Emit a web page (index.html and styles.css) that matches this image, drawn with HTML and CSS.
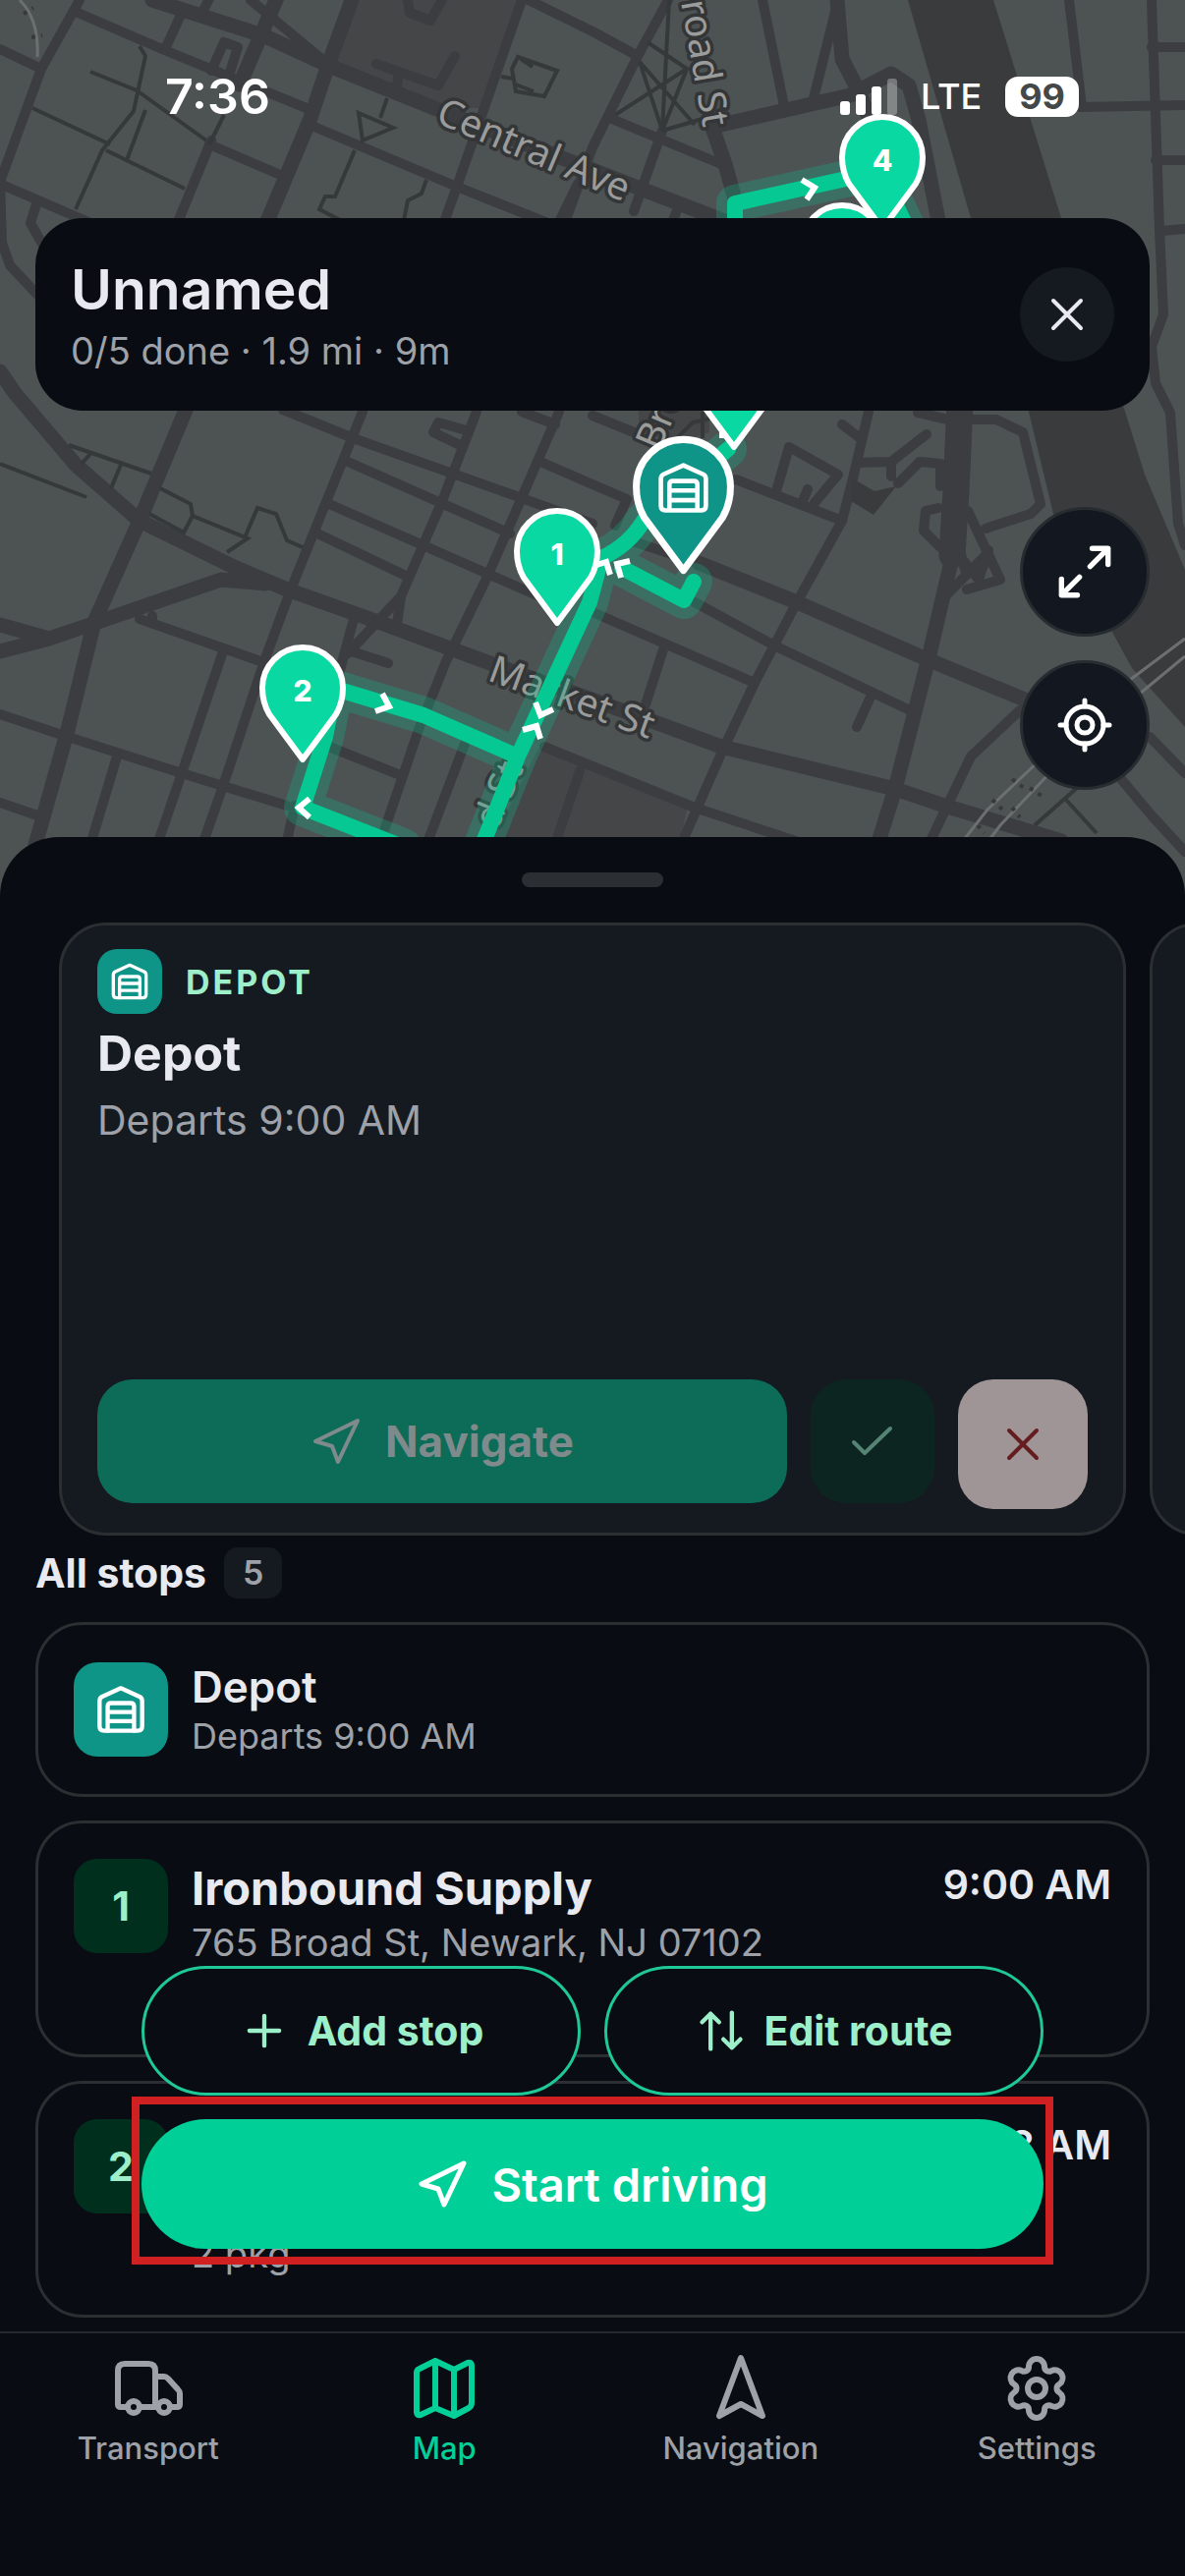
FILE: index.html
```html
<!DOCTYPE html>
<html lang="en">
<head>
    <meta charset="UTF-8">
    <meta name="viewport" content="width=device-width, initial-scale=1.0">
    <title>Route Map</title>
    <link rel="stylesheet" href="styles.css">
</head>
<body>
    <!-- Shared icons -->
    <svg class="sprite" aria-hidden="true">
        <symbol id="icon-depot" viewBox="0 0 24 24">
            <path d="M12 2 L20.8 6 Q22 6.6 22 8 V20 Q22 22 20 22 H4 Q2 22 2 20 V8 Q2 6.6 3.2 6 Z"/>
            <path d="M5.8 22 V10.6 Q5.8 9 7.4 9 H16.6 Q18.2 9 18.2 10.6 V22 M5.8 13.2 H18.2 M5.8 17.5 H18.2"/>
        </symbol>
        <symbol id="icon-send" viewBox="-26 -26 52 52">
            <path d="M22 -21 L-21 0 L-4 5 L2 21 Z"/>
        </symbol>
        <symbol id="icon-close" viewBox="-26 -26 52 52">
            <path d="M-14 -14 L14 14 M14 -14 L-14 14"/>
        </symbol>
        <symbol id="pin" viewBox="-50 -126 100 130" overflow="visible">
            <path d="M0 -4 L-34 -50 Q-41 -62 -41 -77 A41 41 0 0 1 41 -77 Q41 -62 34 -50 Z"/>
        </symbol>
    </svg>

    <main>
        <section class="map-area">
            <svg class="map" viewBox="0 0 1206 918" preserveAspectRatio="xMidYMin slice" aria-hidden="true">
                <!-- Parks and river -->
                <g class="park">
                    <path d="M363 0 L342 63 L442 110 L490 110 L531 0 Z"/>
                    <path d="M548 762 L603 783 L699 823 L690 870 L494 870 Z"/>
                    <path d="M650 400 H722 V440 L690 450 L650 440 Z"/>
                </g>
                <path class="water" d="M924 0 H1011 L1080 222 L1145 419 L1165 483 L1206 580 V740 L1152 680 L1134 647 L1072 523 L1047 419 L988 222 Z"/>

                <!-- Wide roads -->
                <g class="road road-wide">
                    <path d="M155 0 L270 37 L335 67 L442 110 L626 182 L740 226"/>
                    <path d="M358 0 L335 63 L315 123 L270 230 M283 -5 L244 86"/>
                    <path d="M0 378 L15 400 L77 473 L142 530 L238 577 L292 600 L385 633 L504 677 L661 733 L734 760 L911 803 L961 820 L1080 856"/>
                    <path d="M192 410 L142 530 L96 633 L69 743 L36 860"/>
                    <path d="M0 663 L50 650 L100 633 L225 590 L270 594 M0 636 L50 650"/>
                    <path d="M972 555 L945 670 L911 803 L893 860"/>
                    <path d="M711 573 L811 613 L941 670 L1050 715"/>
                    <path d="M724 127 L738 167 L750 210"/>
                    <path d="M852 0 L857 60 L876 97 L889 133 M734 127 L865 97 L907 75 L925 87 L935 122 L955 225"/>
                </g>
                <path class="road road-huge" d="M977 410 L973 500 L969 565"/>

                <!-- Streets -->
                <g class="road">
                    <path d="M77 12 L165 50 L319 113 M315 127 L465 190 L555 226 M531 0 L465 190 L452 226"/>
                    <path d="M81 0 L42 70 L0 185 M0 50 L42 70 M0 187 L90 226"/>
                    <path d="M255 0 L330 62 M185 13 L168 50 M215 -5 L206 12 M213 147 L283 177 M215 143 L181 226"/>
                    <path d="M215 72 L228 43 L242 48 L232 80 M415 0 L417 13 L438 21 L450 0 M383 65 L446 87 L463 57 M405 80 L403 96"/>
                    <path d="M538 0 L603 32 L649 57 M680 0 L649 57 L603 150 L575 226 M588 187 L569 226"/>
                    <path d="M620 120 L734 167 M674 133 L645 215 M689 214 L685 224"/>
                    <path d="M776 0 L799 113 M850 12 L826 108 M1088 0 L1101 108 M1099 109 L1206 107"/>
                    <path d="M1172 0 L1180 233 L1184 320 L1172 353 L1176 390 L1191 420 L1199 533 L1206 555"/>
                    <path d="M1172 48 H1206 M1176 163 H1206 M1182 235 L1206 233"/>
                    <path d="M0 185 L2 247 L10 270 L40 302 M37 208 L31 227 L44 250"/>
                    <path d="M142 630 L265 673 M155 627 V634 M369 419 L296 600 L269 673 L227 800 L206 860"/>
                    <path d="M485 419 L450 510 L408 607 L404 635 M408 607 L354 665 M569 419 L496 587 L454 673 L427 740 L386 860"/>
                    <path d="M288 417 L362 447 L531 507 L603 533 M354 470 L519 543 M335 513 L560 612 M323 543 L415 587"/>
                    <path d="M550 470 L603 493 L638 508 L626 535 M531 419 L565 432 M603 423 L645 440"/>
                    <path d="M471 437 L446 430 L441 440 L470 454"/>
                    <path d="M0 727 L69 750 L185 787 L292 820 M0 817 L38 830 M227 663 L185 787 L160 860 M119 770 L92 860"/>
                    <path d="M360 630 L350 667 L331 740 M358 663 L395 675 M335 760 L410 790 M473 757 L434 860 M300 820 L292 856"/>
                    <path d="M554 760 L603 780 L707 822 L810 856 M590 785 L566 856"/>
                    <path d="M749 488 L857 530 M707 613 L788 657 L926 723 M603 623 L768 695 M641 550 L711 573"/>
                    <path d="M884 419 L868 487 L857 530 L811 613 L768 695 L734 767 L693 860"/>
                    <path d="M991 427 L1014 427 L1041 440 L1059 513 L1049 523 L1003 538 M934 420 L965 427"/>
                    <path d="M985 520 L1018 590 L984 600 M980 570 L996 590 L1006 560 M964 605 L1006 562 M977 560 L982 580"/>
                    <path d="M803 455 L853 483 L828 513 M803 455 L790 500 M872 471 L907 470 L943 442 M857 432 L874 445 M914 492 L936 470 L957 472 V495 M907 470 V485 M822 498 L816 512"/>
                    <path d="M955 517 L942 520 L940 540 L957 557 M676 658 L657 717 M887 707 L872 740"/>
                    <path d="M1038 723 L988 770 L945 860 M1141 793 L1172 830 L1206 867 M1170 750 L1206 787"/>
                </g>
                <path class="road-block" d="M868 487 L890 500 L912 495 L889 524 L866 510 Z"/>

                <!-- Footpaths -->
                <g class="path">
                    <path d="M92 73 L139 92 L210 143 M142 47 L148 57 L136 113 L104 153 L77 213 M33 110 L112 147 M108 153 L188 192 M148 112 L129 163 M228 117 L213 147"/>
                    <path d="M365 115 L400 130 L369 143 Z M394 100 L387 120 M361 153 L341 200 L331 200 L325 213 L346 224 M434 183 L429 197 L415 204 L411 224"/>
                    <path d="M527 58 L567 72 L554 98 L525 93 L521 70 Z M510 78 L522 80 M530 60 L542 68 M525 86 L543 93"/>
                    <path d="M681 0 L674 133 M659 43 L699 70 L626 117 M651 63 L707 127 M699 70 L674 133 M674 133 L718 120 M651 63 L674 133"/>
                    <path d="M70 453 L154 482 M92 462 L83 472 M123 473 L113 497 M0 472 L88 506 M163 497 L194 513 L196 525 L252 548 L231 562 M196 525 L187 542 L152 523 M250 545 L262 517 L281 523 L292 550 L308 557"/>
                    <path d="M690 445 L705 430 L722 426 M715 419 V446 M1053 840 L1096 802 M1084 813 L1116 848"/>
                </g>

                <!-- Railway -->
                <g class="rail">
                    <path d="M20 0 Q40 20 38 58"/>
                    <path d="M1206 650 L1150 692 L1060 772 L1005 824 L980 856"/>
                    <path d="M1206 668 L1160 706 L1070 785 L1018 840 L1006 856"/>
                </g>
                <path class="rail-ties" d="M24 14 L34 8 M32 38 L43 36 M1030 793 L1042 802 M1048 802 L1060 810 M1010 814 L1020 824 M1030 822 L1038 832 M995 840 L1002 848"/>

                <!-- Street names -->
                <g class="street-name">
                    <text transform="translate(442 124) rotate(23)">Central Ave</text>
                    <text transform="translate(693 2) rotate(80)">road St</text>
                    <text transform="translate(495 692) rotate(20)">Market St</text>
                    <text transform="translate(671 460) rotate(-67)">Bro</text>
                    <text transform="translate(506 846) rotate(-67)">d St</text>
                </g>

                <!-- Planned route -->
                <path class="route-glow" d="M706 592 L696 611 L633 578 M741 457 L655 530 Q640 555 612 568 L600 613 L527 770 L490 862 M345 702 L431 728 L527 770 M340 705 L331 750 L308 822 L410 862 M748 240 V207 L870 180 M898 180 L922 230"/>
                <path class="route-line" d="M706 592 L696 611 L633 578 M741 457 L655 530 Q640 555 612 568 L600 613 L527 770 L490 862 M345 702 L431 728 L527 770 M340 705 L331 750 L308 822 L410 862 M748 240 V207 L870 180 M898 180 L922 230"/>
                <path class="route-arrows" d="M816 183 L829 191 L821 203 M389 706 L396 719 L382 724 M545 715 L550 728 L563 722 M532 743 L546 739 L550 752 M315 813 L304 822 L315 832 M641 571 L628 574 L632 588 M607 575 L617 572 L621 585 M732 443 H738"/>

                <!-- Stops -->
                <g class="pins">
                    <use href="#pin" x="807" y="201" width="100" height="130"/>
                    <use href="#pin" x="848" y="111" width="100" height="130"/>
                    <use href="#pin" x="697" y="333" width="100" height="130"/>
                    <use href="#pin" x="517" y="512" width="100" height="130"/>
                    <use href="#pin" x="258" y="651" width="100" height="130"/>
                    <use class="pin-depot" href="#pin" x="637" y="438" width="117" height="152"/>
                </g>
                <use class="pin-icon" href="#icon-depot" x="668" y="469" width="55" height="55"/>
                <g class="pin-number">
                    <text x="898" y="174">4</text>
                    <text x="567" y="575">1</text>
                    <text x="308" y="714">2</text>
                </g>
            </svg>

            <div class="overlay">
                <div class="status-bar">
                    <span class="clock">7:36</span>
                    <div class="status-right">
                        <svg class="signal" viewBox="0 0 58 37" aria-hidden="true">
                            <rect x="0" y="23" width="10" height="14" rx="3"/>
                            <rect x="16" y="16" width="10" height="21" rx="3"/>
                            <rect x="32" y="8" width="10" height="29" rx="3"/>
                            <rect class="bar-off" x="48" y="0" width="10" height="37" rx="3"/>
                        </svg>
                        <span class="network">LTE</span>
                        <span class="battery">99</span>
                    </div>
                </div>

                <header class="route-header">
                    <div>
                        <h1>Unnamed</h1>
                        <p>0/5 done · 1.9 mi · 9m</p>
                    </div>
                    <button class="close-btn" type="button" aria-label="Close">
                        <svg class="icon"><use href="#icon-close"/></svg>
                    </button>
                </header>

                <div class="map-controls">
                    <button type="button" aria-label="Fit route">
                        <svg class="icon" viewBox="-26 -26 52 52">
                            <path d="M5 -5 L22 -22 M7 -22 H22 V-7 M-5 5 L-22 22 M-7 22 H-22 V7"/>
                        </svg>
                    </button>
                    <button type="button" aria-label="My location">
                        <svg class="icon" viewBox="-28 -28 56 56">
                            <circle r="19"/>
                            <circle r="8"/>
                            <path d="M0 -19 V-25 M0 19 V25 M-19 0 H-25 M19 0 H25"/>
                        </svg>
                    </button>
                </div>
            </div>
        </section>

        <section class="sheet">
            <div class="handle"></div>

            <div class="cards">
                <article class="card">
                    <div class="card-label">
                        <span class="depot-badge"><svg class="icon"><use href="#icon-depot"/></svg></span>
                        DEPOT
                    </div>
                    <h2>Depot</h2>
                    <p>Departs 9:00 AM</p>
                    <div class="card-actions">
                        <button class="navigate-btn" type="button" disabled>
                            <svg class="icon"><use href="#icon-send"/></svg>
                            Navigate
                        </button>
                        <button class="done-btn" type="button" aria-label="Mark done" disabled>
                            <svg class="icon" viewBox="-26 -26 52 52"><path d="M-19 1 L-8 12 L18 -13"/></svg>
                        </button>
                        <button class="skip-btn" type="button" aria-label="Skip stop" disabled>
                            <svg class="icon"><use href="#icon-close"/></svg>
                        </button>
                    </div>
                </article>
                <article class="card"></article>
            </div>

            <div class="stops-title">
                <h3>All stops</h3>
                <span class="count">5</span>
            </div>

            <ul class="stops">
                <li class="stop stop-depot">
                    <span class="tile"><svg class="icon"><use href="#icon-depot"/></svg></span>
                    <div class="stop-info">
                        <h4>Depot</h4>
                        <p>Departs 9:00 AM</p>
                    </div>
                </li>
                <li class="stop">
                    <span class="tile">1</span>
                    <div class="stop-info">
                        <h4>Ironbound Supply</h4>
                        <p>765 Broad St, Newark, NJ 07102</p>
                        <p>&nbsp;</p>
                    </div>
                    <time>9:00 AM</time>
                </li>
                <li class="stop">
                    <span class="tile">2</span>
                    <div class="stop-info">
                        <h4>&nbsp;</h4>
                        <p>&nbsp;</p>
                        <p>2 pkg</p>
                    </div>
                    <time>9:03 AM</time>
                </li>
            </ul>
        </section>

        <div class="actions">
            <button class="outline-btn" type="button">
                <svg class="icon" viewBox="-24 -24 48 48"><path d="M-14 0 H14 M0 -14 V14"/></svg>
                Add stop
            </button>
            <button class="outline-btn" type="button">
                <svg class="icon" viewBox="-24 -24 48 48"><path d="M-10 17 V-16 M-18 -8 L-10 -16 L-2 -8 M10 -17 V16 M2 8 L10 16 L18 8"/></svg>
                Edit route
            </button>
            <div class="start">
                <button class="start-btn" type="button">
                    <svg class="icon"><use href="#icon-send"/></svg>
                    Start driving
                </button>
                <div class="highlight"></div>
            </div>
        </div>
    </main>

    <nav class="tab-bar">
        <a href="#transport">
            <svg class="icon" viewBox="-36 -36 72 72">
                <path d="M-21 19 H-28 Q-31 19 -31 16 V-18 Q-31 -25 -24 -25 H0 Q7 -25 7 -18 V19 M-9 19 H10 M7 -12 H16 Q18 -12 20 -10 L30 1 Q32 3 32 5 V16 Q32 19 29 19 H22"/>
                <circle cx="-15" cy="19" r="6"/>
                <circle cx="16" cy="19" r="6"/>
            </svg>
            Transport
        </a>
        <a class="active" href="#map">
            <svg class="icon" viewBox="-36 -36 72 72">
                <path d="M-28 -16 Q-28 -19 -25 -20 L-9 -28 L10 -19 L24 -26 Q28 -27 28 -23 V15 Q28 18 25 20 L10 28 L-9 20 L-24 27 Q-28 28 -28 24 Z M-9 -28 V20 M10 -19 V28"/>
            </svg>
            Map
        </a>
        <a href="#navigation">
            <svg class="icon" viewBox="-36 -36 72 72">
                <path d="M0 -31 L22 28 L0 16 L-22 28 Z"/>
            </svg>
            Navigation
        </a>
        <a href="#settings">
            <svg class="icon" viewBox="-36 -36 72 72">
                <path d="M-8 -22 A8 8 0 0 1 8 -22 A4.6 4.6 0 0 0 15 -17.9 A8 8 0 0 1 23 -4.1 A4.6 4.6 0 0 0 23 4.1 A8 8 0 0 1 15 17.9 A4.6 4.6 0 0 0 8 22 A8 8 0 0 1 -8 22 A4.6 4.6 0 0 0 -15 17.9 A8 8 0 0 1 -23 4.1 A4.6 4.6 0 0 0 -23 -4.1 A8 8 0 0 1 -15 -17.9 A4.6 4.6 0 0 0 -8 -22 Z"/>
                <circle r="9"/>
            </svg>
            Settings
        </a>
    </nav>
</body>
</html>
```
FILE: styles.css
```css
* {
    box-sizing: border-box;
}

body {
    font-family: Inter, "Liberation Sans", sans-serif;
    margin: 0;
    height: 100vh;
    display: flex;
    flex-direction: column;
    background: #090d13;
    color: #e8eaf0;
    overflow: hidden;
}

h1, h2, h3, h4, p, ul {
    margin: 0;
    padding: 0;
}

button {
    font-family: inherit;
    border: none;
    padding: 0;
    cursor: pointer;
    display: flex;
    align-items: center;
    justify-content: center;
}

.sprite {
    position: absolute;
    width: 0;
    height: 0;
}

.icon {
    width: 52px;
    height: 52px;
    flex: none;
    fill: none;
    stroke: currentColor;
    stroke-width: 4px;
    stroke-linecap: round;
    stroke-linejoin: round;
}

main {
    flex: 1;
    min-height: 0;
    position: relative;
    display: flex;
    flex-direction: column;
    overflow: hidden;
}

/* Map */
.map-area {
    flex: none;
    height: 918px;
    position: relative;
    background: #4d5253;
}

.map {
    position: absolute;
    inset: 0;
    width: 100%;
    height: 100%;
}

.park {
    fill: #454648;
}

.water,
.road-block {
    fill: #3a3b3d;
}

.road {
    fill: none;
    stroke: #3c3d40;
    stroke-width: 10;
    stroke-linejoin: round;
    stroke-linecap: round;
}

.road-wide {
    stroke-width: 15;
}

.road-huge {
    stroke-width: 27;
}

.path {
    fill: none;
    stroke: #35393a;
    stroke-width: 4;
}

.rail {
    fill: none;
    stroke: #6c6f70;
    stroke-width: 3;
}

.rail-ties {
    stroke: #38393b;
    stroke-width: 4;
    stroke-dasharray: 4 6;
}

.street-name {
    font-family: "Noto Sans", sans-serif;
    font-size: 39px;
    fill: #9a9b9b;
    stroke: #333536;
    stroke-width: 7;
    stroke-linejoin: round;
    paint-order: stroke;
}

.route-glow {
    fill: none;
    stroke: #13b489;
    stroke-opacity: 0.3;
    stroke-width: 38;
    stroke-linejoin: round;
    stroke-linecap: round;
}

.route-line {
    fill: none;
    stroke: #05c893;
    stroke-width: 16;
    stroke-linejoin: round;
    stroke-linecap: round;
}

.route-arrows {
    fill: none;
    stroke: #fff;
    stroke-width: 6;
}

.pins {
    fill: #0ad8a2;
    stroke: #fff;
    stroke-width: 6;
    stroke-linejoin: round;
}

.pin-depot {
    fill: #0f9488;
}

.pin-icon {
    fill: none;
    stroke: #fff;
    stroke-width: 2;
    stroke-linejoin: round;
}

.pin-number {
    font-size: 30px;
    font-weight: 800;
    fill: #fff;
    text-anchor: middle;
}

.overlay {
    position: relative;
    padding: 68px 36px 0;
}

.status-bar {
    display: flex;
    justify-content: space-between;
    align-items: center;
    height: 60px;
    padding: 0 66px 0 132px;
    color: #fff;
}

.clock {
    font-size: 50px;
    font-weight: 600;
}

.status-right {
    display: flex;
    align-items: center;
    gap: 24px;
}

.signal {
    width: 58px;
    height: 37px;
    fill: #fff;
}

.bar-off {
    opacity: 0.3;
}

.network {
    font-size: 36px;
    font-weight: 500;
}

.battery {
    padding: 0 14px;
    background: #fff;
    border-radius: 13px;
    color: #444849;
    font-size: 36px;
    font-weight: 700;
    line-height: 41px;
    margin-right: 6px;
}

.route-header {
    display: flex;
    align-items: center;
    justify-content: space-between;
    margin-top: 94px;
    padding: 36px;
    background: #090d13;
    border-radius: 48px;
}

.route-header h1 {
    font-size: 57px;
    font-weight: 600;
    line-height: 74px;
}

.route-header p {
    font-size: 38px;
    line-height: 50px;
    color: #9ea2a8;
}

.close-btn {
    width: 96px;
    height: 96px;
    border-radius: 50%;
    background: #151a21;
    color: #e8eaf0;
}

.map-controls {
    display: flex;
    flex-direction: column;
    align-items: flex-end;
    gap: 24px;
    margin-top: 98px;
}

.map-controls button {
    width: 132px;
    height: 132px;
    border-radius: 50%;
    background: #131820;
    border: 3px solid #272c31;
    color: #fff;
}

.map-controls .icon {
    width: 56px;
    height: 56px;
    stroke-width: 5px;
}

/* Bottom sheet */
.sheet {
    position: relative;
    flex: 1;
    margin-top: -66px;
    padding-top: 36px;
    background: #090d13;
    border-radius: 60px 60px 0 0;
}

.handle {
    width: 144px;
    height: 15px;
    margin: 0 auto 36px;
    border-radius: 8px;
    background: #2b2f33;
}

.cards {
    display: flex;
    gap: 24px;
    padding-left: 60px;
    overflow: hidden;
}

.card {
    flex: 0 0 calc(100% - 60px);
    height: 624px;
    display: flex;
    flex-direction: column;
    padding: 24px 36px;
    background: #151a21;
    border: 3px solid #2b2f32;
    border-radius: 48px;
}

.card-label {
    display: flex;
    align-items: center;
    gap: 24px;
    font-size: 34px;
    font-weight: 700;
    letter-spacing: 3px;
    color: #9defca;
}

.depot-badge {
    display: flex;
    align-items: center;
    justify-content: center;
    width: 66px;
    height: 66px;
    border-radius: 20px;
    background: #0f9488;
    color: #fff;
}

.depot-badge .icon {
    width: 40px;
    height: 40px;
    stroke-width: 2px;
}

.card h2 {
    margin-top: 8px;
    font-size: 50px;
    font-weight: 700;
    line-height: 64px;
}

.card p {
    margin-top: 8px;
    font-size: 41px;
    line-height: 56px;
    color: #9ea2a8;
}

.card-actions {
    display: flex;
    align-items: flex-start;
    gap: 24px;
    margin-top: auto;
}

.card-actions button {
    height: 126px;
    border-radius: 36px;
}

.navigate-btn {
    flex: 1;
    gap: 24px;
    background: #0d6c57;
    color: #7f8a8c;
    font-size: 44px;
    font-weight: 700;
}

.done-btn {
    width: 126px;
    background: #0c2520;
    color: #568474;
}

.card-actions .skip-btn {
    width: 132px;
    height: 132px;
    background: #a09596;
    color: #651c1e;
}

.stops-title {
    display: flex;
    align-items: center;
    gap: 18px;
    margin: 12px 36px 24px;
}

.stops-title h3 {
    font-size: 41px;
    font-weight: 700;
    line-height: 52px;
}

.count {
    padding: 0 19px;
    border-radius: 14px;
    background: #151a21;
    color: #9ea2a8;
    font-size: 34px;
    font-weight: 600;
    line-height: 52px;
}

.stops {
    display: flex;
    flex-direction: column;
    gap: 24px;
    padding: 0 36px;
    list-style: none;
}

.stop {
    display: flex;
    align-items: flex-start;
    gap: 24px;
    padding: 36px;
    border: 3px solid #2b2f32;
    border-radius: 48px;
}

.tile {
    display: flex;
    align-items: center;
    justify-content: center;
    flex: none;
    width: 96px;
    height: 96px;
    border-radius: 24px;
    background: #002f1d;
    color: #9defca;
    font-size: 41px;
    font-weight: 700;
}

.stop-info {
    flex: 1;
}

.stop h4 {
    font-size: 47px;
    font-weight: 700;
    line-height: 59px;
}

.stop p {
    font-size: 38px;
    line-height: 52px;
    color: #9ea2a8;
}

.stop time {
    font-size: 41px;
    font-weight: 600;
    line-height: 52px;
}

.stop-depot {
    align-items: center;
}

.stop-depot .tile {
    background: #0f9488;
    color: #fff;
}

.stop-depot .icon {
    stroke-width: 2px;
}

.stop-depot h4 {
    font-size: 44px;
    font-weight: 600;
    line-height: 54px;
}

.stop-depot p {
    font-size: 36px;
    line-height: 46px;
}

/* Floating buttons */
.actions {
    position: absolute;
    left: 144px;
    right: 144px;
    bottom: 84px;
    display: grid;
    grid-template-columns: 1fr 1fr;
    gap: 24px;
}

.outline-btn,
.start-btn {
    height: 132px;
    border-radius: 66px;
}

.outline-btn {
    gap: 18px;
    background: #090d13;
    border: 3px solid #1ec997;
    color: #9defca;
    font-size: 41px;
    font-weight: 700;
}

.start {
    grid-column: 1 / -1;
    position: relative;
}

.start-btn {
    width: 100%;
    gap: 24px;
    background: #00d098;
    color: #fff;
    font-size: 47px;
    font-weight: 600;
}

.start-btn .icon {
    stroke-width: 5px;
}

.highlight {
    position: absolute;
    inset: -23px -10px -16px;
    border: 8px solid #d12022;
    pointer-events: none;
}

/* Tabs */
.tab-bar {
    display: grid;
    grid-template-columns: repeat(4, 1fr);
    flex: none;
    height: 249px;
    padding-top: 20px;
    border-top: 2px solid #26292e;
    background: #090d13;
}

.tab-bar a {
    display: flex;
    flex-direction: column;
    align-items: center;
    gap: 5px;
    color: #9ea2a8;
    font-size: 31px;
    font-weight: 500;
    line-height: 40px;
    text-decoration: none;
}

.tab-bar a.active {
    color: #05cf98;
}

.tab-bar .icon {
    width: 72px;
    height: 72px;
    stroke-width: 6px;
}
```
